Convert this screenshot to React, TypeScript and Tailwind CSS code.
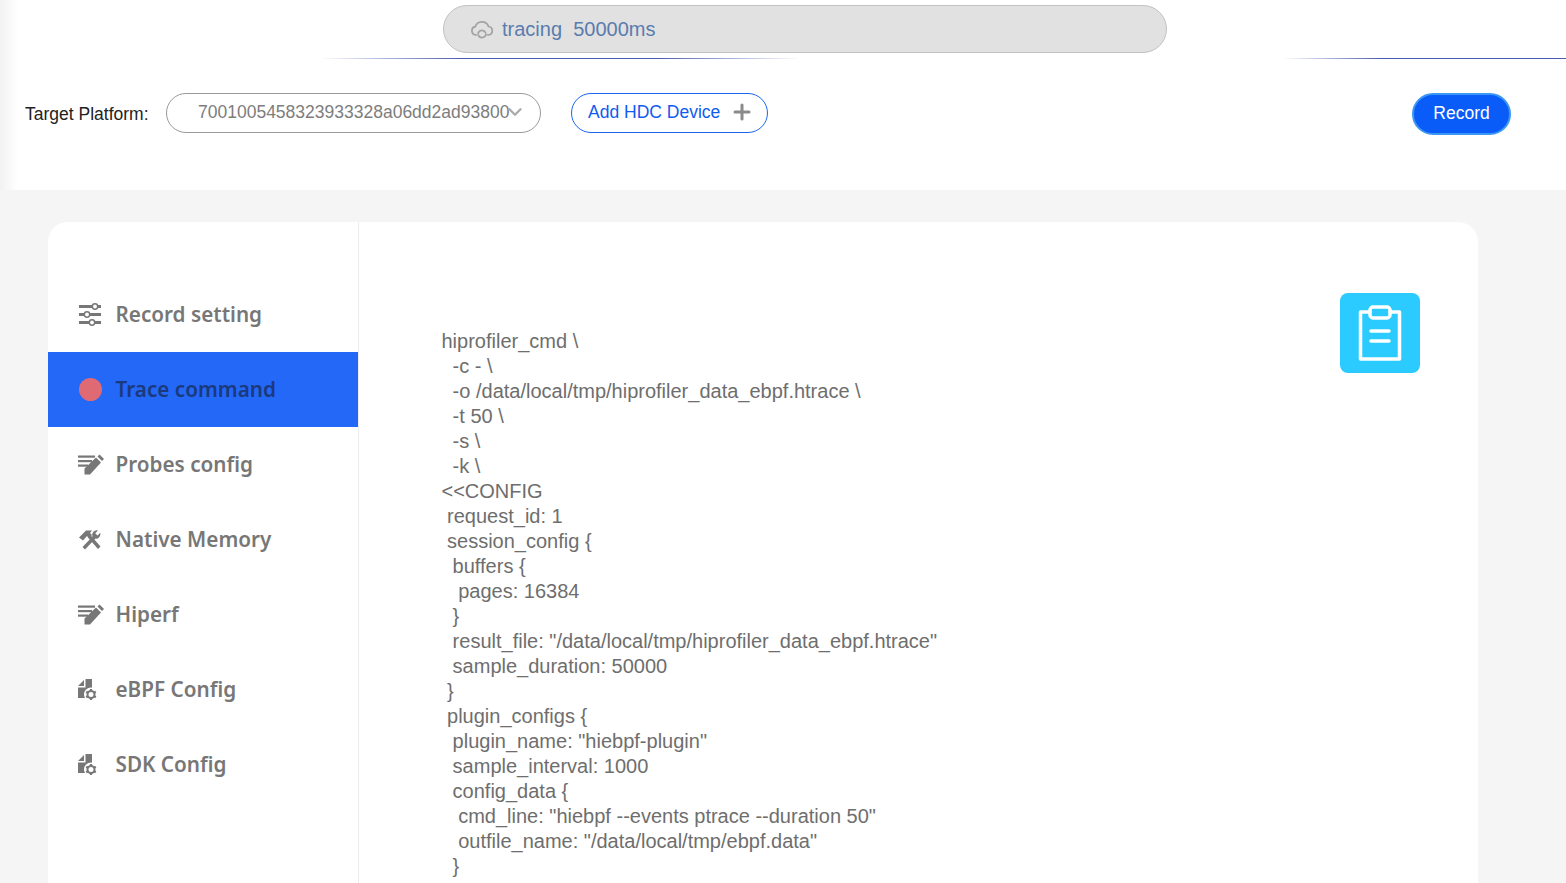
import React from 'react';
import { ChevronDown, Plus } from 'lucide-react';

const sans = "font-['Liberation_Sans',Arial,sans-serif]";

const SlidersIcon = () => (
  <svg width="24" height="24" viewBox="0 0 24 24" fill="#777">
    <rect x="1" y="2" width="22" height="3" />
    <rect x="1" y="10" width="22" height="3" />
    <rect x="1" y="18" width="22" height="3" />
    <circle cx="17" cy="3.500" r="2.700" fill="#fff" stroke="#777" strokeWidth="1.500" />
    <circle cx="9" cy="11.500" r="2.700" fill="#fff" stroke="#777" strokeWidth="1.500" />
    <circle cx="14" cy="19.500" r="2.700" fill="#fff" stroke="#777" strokeWidth="1.500" />
  </svg>
);

const EditIcon = () => (
  <svg width="26" height="21" viewBox="0 0 26 21" fill="#777">
    <rect x="0" y="1.500" width="17" height="2.200" />
    <rect x="0" y="6" width="14" height="2.200" />
    <rect x="0" y="10.500" width="10" height="2.200" />
    <path d="M6.500 20.500V14.500L18 3.500 23 8.500 12 20.500z" />
    <path d="M19.500 2.500 21.500.5l4.500 4.500-2 2z" />
  </svg>
);

const ToolsIcon = () => (
  <svg width="24" height="22" viewBox="0 0 24 22" fill="#777">
    <path d="M1 8.500 8 1.500h6l-2 2.500 2 2-3 3-2-2-4 4.500z" />
    <path d="M9.500 8 12 5.500 22.500 17.500 20 20z" />
    <path d="M4.500 18 15 7l2.500 2.500L7 20.500z" />
    <path d="M14.500 7.500a4.500 4.500 0 0 1 5.500-6L17.200 4.300l2.300 2.300 2.800-2.800a4.500 4.500 0 0 1-6 5.500z" />
  </svg>
);

const FileGearIcon = () => (
  <svg width="20" height="22" viewBox="0 0 20 22" fill="#777">
    <path d="M0 7 6 1v6z" />
    <path d="M7.500 0H14v19H0V8.500h7.500z" />
    <circle cx="13" cy="15.500" r="7" fill="#fff" />
    <g stroke="#777" strokeWidth="2.200">
      <path d="M13 10v11M8.200 12.700l9.600 5.600M17.800 12.700l-9.600 5.600" />
    </g>
    <circle cx="13" cy="15.500" r="3.500" fill="#fff" stroke="#777" strokeWidth="2" />
  </svg>
);

const CloudIcon = () => (
  <svg width="22" height="20" viewBox="0 0 22 20" fill="none" stroke="#a2a2a2" strokeWidth="1.700" strokeLinecap="round">
    <path d="M5.500 16H5a4.200 4.200 0 0 1-.8-8.300A7 7 0 0 1 17.500 7.500a4.300 4.300 0 0 1 .2 8.500H16.500" />
    <path d="M7 15a4 4 0 0 1 7.500-1.500M15 15a4 4 0 0 1-7.500 1.500" />
  </svg>
);

const ClipboardIcon = () => (
  <svg width="44" height="56" viewBox="0 0 44 56" fill="none" stroke="#fff" strokeWidth="3.500" strokeLinejoin="round" strokeLinecap="round">
    <path d="M12 7H2.500v47h39V7H32" />
    <rect x="12" y="2" width="20" height="11" rx="3" />
    <path d="M13 26h18M13 36h18" />
  </svg>
);

const navItems = [
  { label: 'Record setting', icon: <SlidersIcon /> },
  { label: 'Trace command', icon: <span className="block w-[23px] h-[23px] ml-px rounded-full bg-[#e06a74]" />, active: true },
  { label: 'Probes config', icon: <EditIcon /> },
  { label: 'Native Memory', icon: <ToolsIcon /> },
  { label: 'Hiperf', icon: <EditIcon /> },
  { label: 'eBPF Config', icon: <FileGearIcon /> },
  { label: 'SDK Config', icon: <FileGearIcon /> },
];

const command = `hiprofiler_cmd \\
  -c - \\
  -o /data/local/tmp/hiprofiler_data_ebpf.htrace \\
  -t 50 \\
  -s \\
  -k \\
<<CONFIG
 request_id: 1
 session_config {
  buffers {
   pages: 16384
  }
  result_file: "/data/local/tmp/hiprofiler_data_ebpf.htrace"
  sample_duration: 50000
 }
 plugin_configs {
  plugin_name: "hiebpf-plugin"
  sample_interval: 1000
  config_data {
   cmd_line: "hiebpf --events ptrace --duration 50"
   outfile_name: "/data/local/tmp/ebpf.data"
  }`;

export default function App() {
  return (
    <div className={`${sans} h-[883px] overflow-hidden bg-[#f5f5f5]`}>
      {/* Header */}
      <header className="h-[190px] bg-[linear-gradient(90deg,#f2f2f2,#ffffff_18px)] pt-[5px]">
        <div className="flex items-center w-[724px] h-[48px] ml-[443px] pl-[27px] gap-[9px] rounded-[24px] bg-[#e1e1e1] border border-[#c2c2c2] text-[20px] text-[#5a7cae]">
          <CloudIcon />
          <span className="whitespace-pre">tracing  50000ms</span>
        </div>
        <div className="flex h-px mt-[5px]">
          <div className="ml-[320px] w-[480px] bg-[linear-gradient(90deg,transparent,#4a5ab0_30%,#4a5ab0_70%,transparent)]" />
          <div className="ml-[483px] flex-1 bg-[linear-gradient(90deg,transparent,#4a5ab0_35%)]" />
        </div>
        <div className="flex items-start mt-[34px] pl-[25px]">
          <span className="mt-[9px] w-[141px] text-[17.5px] leading-[24px] text-[#222]">Target Platform:</span>
          <div className="flex items-center w-[375px] h-[40px] pl-[31px] pb-[2px] rounded-[20px] border border-[#9a9a9a] text-[17.5px] text-[#7d7d7d]">
            <span>7001005458323933328a06dd2ad93800</span>
            <ChevronDown size={22} color="#aaa" strokeWidth={2.500} className="ml-[-5px]" />
          </div>
          <button className="flex items-center w-[197px] h-[40px] ml-[30px] pl-[16px] pb-[2px] gap-[10px] rounded-[20px] border border-[#1a66f0] bg-white text-[17.5px] text-[#0f5cf0]">
            Add HDC Device
            <Plus size={24} color="#8a8a8a" strokeWidth={3} />
          </button>
          <button className="w-[99px] h-[42px] ml-[644px] pb-[2px] rounded-[21px] border-2 border-[#3b96f5] bg-[#0a5cf9] text-[17.5px] text-white">
            Record
          </button>
        </div>
      </header>

      {/* Main card */}
      <main className="pt-[32px] pl-[48px]">
        <div className="flex w-[1430px] h-[700px] rounded-t-[20px] bg-white overflow-hidden">
          <nav className="w-[311px] shrink-0 pt-[55px] border-r border-[#ececec]">
            {navItems.map((item) => (
              <div
                key={item.label}
                className={`flex items-center h-[75px] font-['Noto_Sans',sans-serif] font-semibold text-[20.7px] ${item.active ? 'bg-[#2468f8] text-[#1b3a7c]' : 'text-[#777]'}`}
              >
                <span className="flex justify-start w-[67.500px] pl-[30px] shrink-0">{item.icon}</span>
                {item.label}
              </div>
            ))}
          </nav>
          <section className="flex flex-1 items-start justify-between pl-[82.500px] pr-[58px] pt-[71px]">
            <pre className={`${sans} mt-[36px] text-[20px] leading-[25px] text-[#6e6e6e]`}>
              {command}
            </pre>
            <button className="flex items-center justify-center w-[80px] h-[80px] rounded-[8px] bg-[#2bcbff]">
              <ClipboardIcon />
            </button>
          </section>
        </div>
      </main>
    </div>
  );
}
